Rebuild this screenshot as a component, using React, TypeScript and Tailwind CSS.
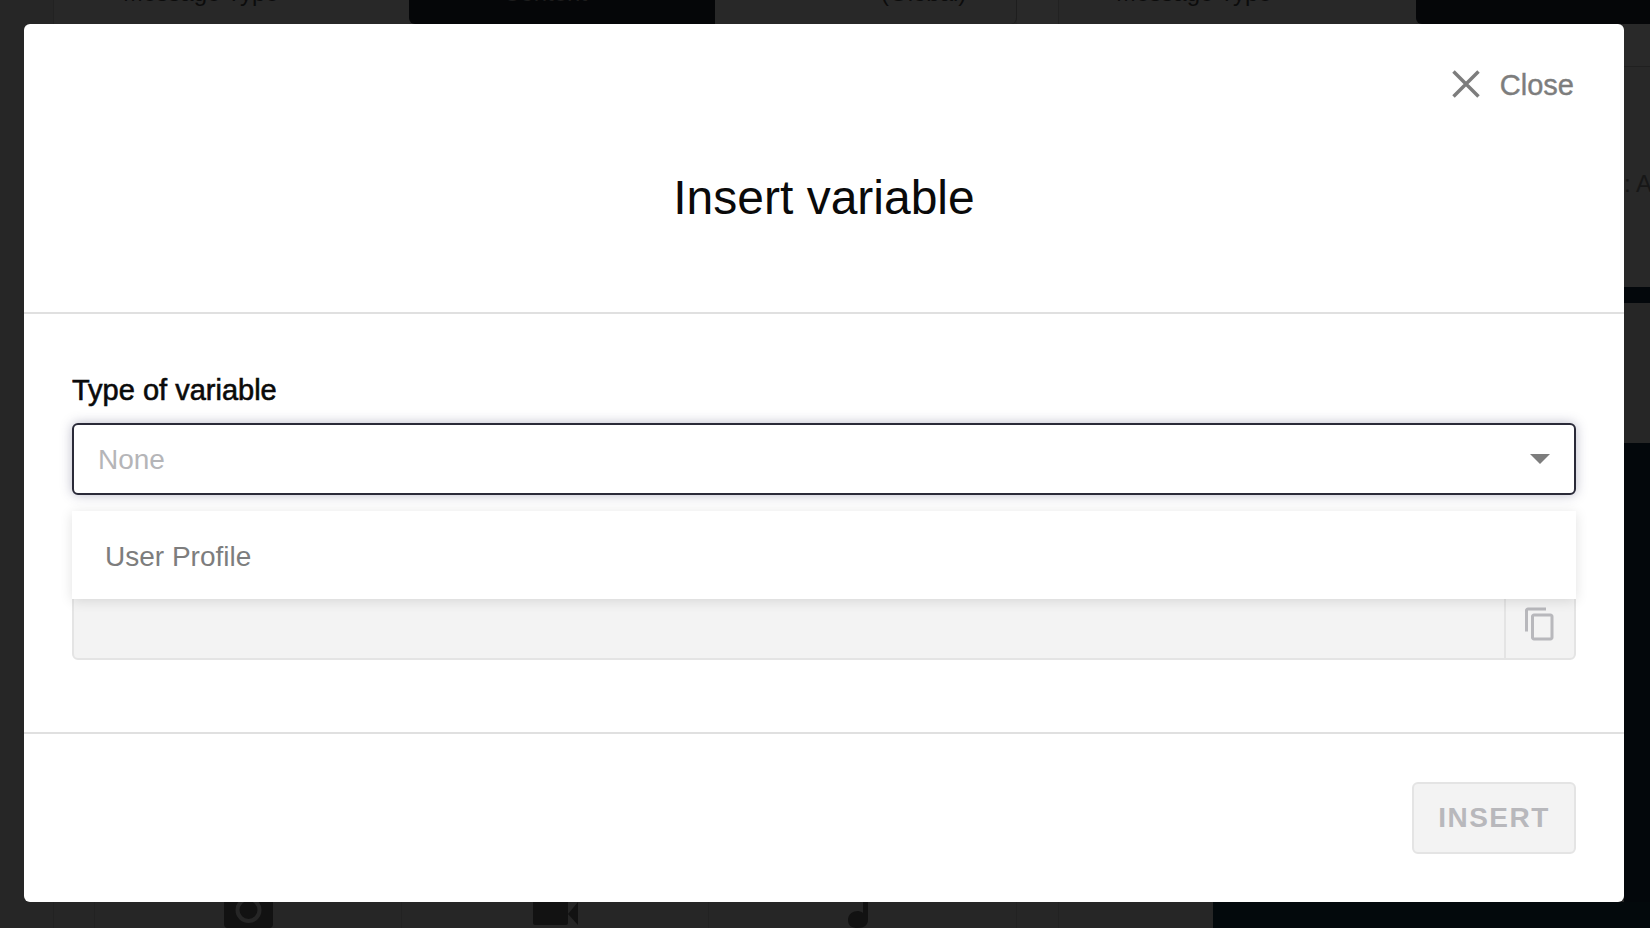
export default function App() {
  return (
    <div className="relative h-[928px] w-[1650px] overflow-hidden bg-[#262626] font-['Liberation_Sans',Arial,sans-serif] antialiased">
      {/* Dimmed page behind the dialog */}
      <div className="flex h-full flex-col">
        <div className="flex h-6 shrink-0 text-[24px] leading-6 whitespace-nowrap">
          <div className="w-[54px] border-r border-[#222222] bg-[#262626]" />
          <div className="w-[355px] overflow-hidden bg-[#282828] pl-[69px] text-[#0c0c0c]">
            <div className="-mt-[19px]">Message Type</div>
          </div>
          <div className="w-[306px] overflow-hidden rounded-bl-[6px] bg-[#050608] pl-[94px] text-[#1c1c1c]">
            <div className="-mt-[19px]">Content</div>
          </div>
          <div className="w-[302px] overflow-hidden rounded-br-[6px] border-r border-[#1e1e1e] bg-[#282828] pl-[166px] text-[#0c0c0c]">
            <div className="-mt-[19px]">(Global)</div>
          </div>
          <div className="w-[42px] border-r border-[#222222] bg-[#292929]" />
          <div className="w-[357px] overflow-hidden bg-[#282828] pl-[57px] text-[#0c0c0c]">
            <div className="-mt-[19px]">Message Type</div>
          </div>
          <div className="flex-1 rounded-bl-[6px] bg-[#050608]" />
        </div>

        <div className="flex min-h-0 flex-1 justify-between">
          <div className="w-6 bg-[#262626]" />
          <div className="flex w-[26px] flex-col overflow-hidden">
            <div className="h-[43px] border-b border-[#202020] bg-[#292929]" />
            <div className="flex h-[220px] items-start overflow-hidden whitespace-nowrap bg-[#282828] pt-[103px] text-[24px] leading-7 text-[#171717]">
              <span>: A</span>
            </div>
            <div className="h-4 bg-[#03070b]" />
            <div className="h-[140px] bg-[#262626]" />
            <div className="flex-1 bg-[#03070b]" />
          </div>
        </div>

        <div className="flex h-[26px] shrink-0">
          <div className="w-[54px] border-r border-[#222222]" />
          <div className="w-[41px] border-r border-[#222222]" />
          <div className="flex w-[307px] justify-center border-r border-[#222222]">
            <svg width="49" height="26" viewBox="0 0 49 26">
              <path d="M0 0H49V22a4 4 0 0 1-4 4H4a4 4 0 0 1-4-4Z" fill="#121212" />
              <circle cx="24.5" cy="8" r="11" fill="none" stroke="#262626" strokeWidth="4" />
            </svg>
          </div>
          <div className="flex w-[307px] justify-center border-r border-[#222222]">
            <svg width="45" height="23" viewBox="0 0 45 23">
              <path d="M0 0H35V21a2 2 0 0 1-2 2H2a2 2 0 0 1-2-2Z" fill="#121212" />
              <path d="M35 12L45 0V23Z" fill="#121212" />
            </svg>
          </div>
          <div className="flex w-[308px] justify-center border-r border-[#222222] pr-[10px]">
            <svg width="20" height="26" viewBox="0 0 20 26">
              <path d="M15 0H20V18C20 23 16 26 10 26C4 26 0 24 0 18C0 12 5 9 10 9C12 9 14 10 15 11Z" fill="#121212" />
            </svg>
          </div>
          <div className="w-[42px] border-r border-[#222222]" />
          <div className="w-[154px]" />
          <div className="flex-1 bg-[#03090c]" />
        </div>
      </div>

      {/* Dialog */}
      <div className="absolute left-6 top-6 flex h-[878px] w-[1600px] flex-col rounded-[6px] bg-white">
        <div className="flex h-[290px] shrink-0 flex-col border-b-2 border-[#e0e0e0] pt-[46px]">
          <div className="flex h-7 items-center justify-end gap-5 pr-[50px] text-[29px] leading-7 text-[#7d7d7d]">
            <svg width="28" height="28" viewBox="0 0 28 28" stroke="#7d7d7d" strokeWidth="3.5">
              <path d="M1.5 1.5L26.5 26.5M26.5 1.5L1.5 26.5" />
            </svg>
            <span className="pt-[2px] [-webkit-text-stroke:0.4px_#7d7d7d]">Close</span>
          </div>
          <h1 className="mt-[72px] text-center text-[48px] leading-[56px] font-normal text-[#0a0a0a]">Insert variable</h1>
        </div>

        <div className="flex flex-1 flex-col border-b-2 border-[#e0e0e0] px-12 pt-[60px]">
          <div className="text-[29px] leading-8 text-[#0a0a0a] [-webkit-text-stroke:0.6px_#0a0a0a]">Type of variable</div>

          <div className="relative mt-[17px]">
            <div className="flex h-[72px] items-center justify-between rounded-[6px] border-2 border-[#2a2a38] bg-white pr-6 pl-6 text-[28px] text-[#b5b5b8] shadow-[0_0_12px_rgba(60,60,100,0.35)]">
              <span className="pt-[2px]">None</span>
              <svg width="20" height="10" viewBox="0 0 20 10">
                <path d="M0 0H20L10 10Z" fill="#7d7d7d" />
              </svg>
            </div>
            <div className="absolute inset-x-0 top-[88px] z-10 flex h-[88px] items-center bg-white pt-[4px] pl-[33px] text-[28px] text-[#7d7d7d] shadow-[0_2px_12px_rgba(0,0,0,0.12)]">
              User Profile
            </div>
          </div>

          <div className="mt-[93px] flex h-[72px] rounded-[6px] border-2 border-[#e4e4e4] bg-[#f3f3f3]">
            <div className="flex-1" />
            <div className="flex w-[70px] items-center justify-center border-l-2 border-[#e4e4e4]">
              <svg width="36" height="36" viewBox="0 0 24 24" fill="#b8b8bc">
                <path d="M16 1H4c-1.1 0-2 .9-2 2v14h2V3h12V1zm3 4H8c-1.1 0-2 .9-2 2v14c0 1.1.9 2 2 2h11c1.1 0 2-.9 2-2V7c0-1.1-.9-2-2-2zm0 16H8V7h11v14z" />
              </svg>
            </div>
          </div>
        </div>

        <div className="flex h-[168px] shrink-0 items-start justify-end px-12 pt-12">
          <button className="flex h-[72px] w-[164px] items-center justify-center rounded-[6px] border-2 border-[#e4e4e4] bg-[#f3f3f3] text-[28px] font-bold tracking-[1.5px] text-[#b8b8bc]">
            INSERT
          </button>
        </div>
      </div>
    </div>
  );
}
